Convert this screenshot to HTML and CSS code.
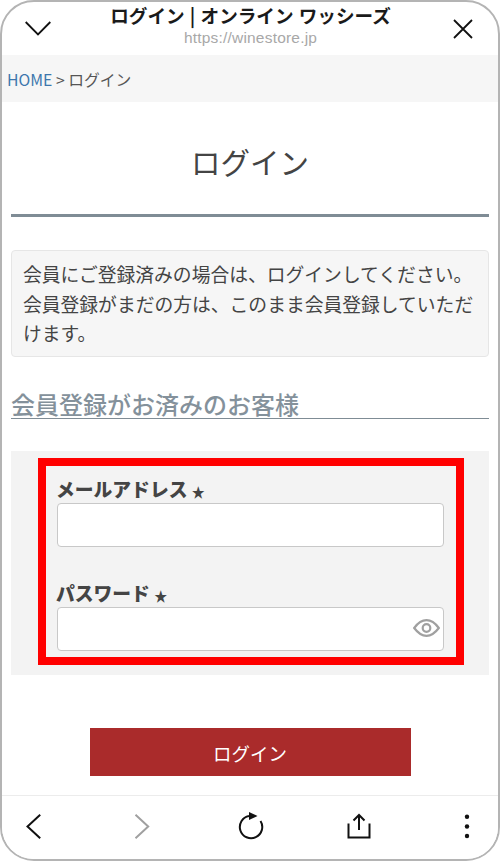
FILE: index.html
```html
<!DOCTYPE html>
<html lang="ja">
<head>
    <meta charset="UTF-8">
    <meta name="viewport" content="width=device-width, initial-scale=1.0">
    <title>ログイン | オンライン ワッシーズ</title>
    <link rel="stylesheet" href="styles.css">
</head>
<body>
    <div class="phone">
        <header class="topbar">
            <svg class="top-icon" width="26" height="15" viewBox="0 0 26 15"><path d="M0.7 1 L13 13.5 L25.3 1" /></svg>
            <div class="top-title">
                <div class="page-name">ログイン | オンライン ワッシーズ</div>
                <div class="page-url">https://winestore.jp</div>
            </div>
            <svg class="top-icon" width="20" height="20" viewBox="0 0 20 20"><path d="M1 1 L19 19 M19 1 L1 19" /></svg>
        </header>
        <nav class="crumbs"><a href="#">HOME</a> &gt; ログイン</nav>
        <main class="content">
            <h1>ログイン</h1>
            <div class="notice">会員にご登録済みの場合は、ログインしてください。<br>会員登録がまだの方は、このまま会員登録していただけます。</div>
            <h2>会員登録がお済みのお客様</h2>
            <div class="form-area">
                <form class="form-box">
                    <label for="email">メールアドレス <span class="star">★</span></label>
                    <input type="text" id="email" class="field">
                    <label for="password" class="second">パスワード <span class="star">★</span></label>
                    <div class="pass-wrap">
                        <input type="password" id="password" class="field">
                        <svg class="eye" width="27" height="18" viewBox="0 0 27 18"><path d="M1.2 9 C5.5 3.2 9.5 1.2 13.5 1.2 C17.5 1.2 21.5 3.2 25.8 9 C21.5 14.8 17.5 16.8 13.5 16.8 C9.5 16.8 5.5 14.8 1.2 9 Z" /><circle cx="13.5" cy="9" r="3.8" /></svg>
                    </div>
                </form>
            </div>
            <button class="login-btn" type="button">ログイン</button>
        </main>
        <footer class="bottombar">
            <svg class="nav-icon" width="40" height="30" viewBox="0 0 40 30"><path d="M26.2 3.8 L13.5 15.5 L26.2 27.2" /></svg>
            <svg class="nav-icon off" width="40" height="30" viewBox="0 0 40 30"><path d="M13.5 3.8 L26.2 15.5 L13.5 27.2" /></svg>
            <svg class="nav-icon" width="40" height="30" viewBox="0 0 40 30"><path d="M18 5 A11.2 11.2 0 1 0 29.5 10" /><path class="solid" d="M18 1 L26.5 5 L18 9 Z" /></svg>
            <svg class="nav-icon" width="40" height="30" viewBox="0 0 40 30"><path d="M20 19 V4 M14.5 9.5 L20 4 L25.5 9.5 M9.5 12.5 V26.5 H30.5 V12.5" /></svg>
            <svg class="nav-icon dots" width="40" height="30" viewBox="0 0 40 30"><circle cx="20" cy="5.7" r="2.2" /><circle cx="20" cy="15.5" r="2.2" /><circle cx="20" cy="25" r="2.2" /></svg>
        </footer>
    </div>
</body>
</html>
```

FILE: styles.css
```css
* {
    box-sizing: border-box;
}
html, body {
    margin: 0;
    height: 100%;
    background-color: #fff;
}
body {
    font-family: "Noto Sans CJK JP", "Noto Sans", sans-serif;
    color: #444;
    overflow: hidden;
}
.phone {
    height: 861px;
    display: flex;
    flex-direction: column;
    background-color: #fff;
    border: 2px solid #b4b4b4;
    border-radius: 34px;
    overflow: hidden;
}
.topbar {
    height: 53px;
    flex: none;
    display: flex;
    align-items: center;
    justify-content: space-between;
    padding: 0 25px 0 23px;
}
.top-icon path {
    fill: none;
    stroke: #111;
    stroke-width: 1.8;
}
.top-title {
    text-align: center;
    margin: -5px 3px 0 0;
}
.page-name {
    font-size: 18.6px;
    line-height: 24px;
    font-weight: 700;
    color: #1a1a1a;
    word-spacing: 1px;
}
.page-url {
    font-family: "Liberation Sans", Arial, sans-serif;
    font-size: 15.5px;
    line-height: 22px;
    letter-spacing: 0.2px;
    color: #a8a8a8;
}
.crumbs {
    height: 47px;
    flex: none;
    padding: 0 5px;
    font-size: 15.8px;
    line-height: 49px;
    background-color: #f6f6f6;
    color: #555;
}
.crumbs a {
    color: #3d76ad;
    text-decoration: none;
}
.content {
    flex: 1;
    min-height: 0;
    padding: 0 9px;
    overflow: hidden;
}
h1 {
    margin: 0;
    height: 115px;
    padding-top: 40px;
    font-size: 29.5px;
    line-height: 38px;
    font-weight: 400;
    text-align: center;
    color: #444;
    border-bottom: 3px solid #7f8c95;
}
.notice {
    margin-top: 33px;
    height: 107px;
    padding: 8px 11px;
    font-size: 18.8px;
    line-height: 29.5px;
    background-color: #f6f6f6;
    border: 1px solid #e6e6e6;
    border-radius: 4px;
}
h2 {
    margin: 31px 0 0;
    height: 31px;
    font-size: 24px;
    line-height: 31px;
    font-weight: 500;
    color: #84919b;
    border-bottom: 1px solid #7f8c95;
    white-space: nowrap;
}
.form-area {
    margin-top: 32px;
    height: 224px;
    padding: 7px 25px 0 27px;
    background-color: #f3f3f3;
}
.form-box {
    height: 207px;
    padding: 11px 12px 0 11px;
    border: 8px solid #ff0000;
}
label {
    display: block;
    height: 24px;
    margin: 0 0 2px -1px;
    font-size: 18.8px;
    line-height: 24px;
    font-weight: 900;
    color: #444;
}
.star {
    font-size: 13px;
    vertical-align: 0;
}
label.second {
    margin-top: 34px;
}
.field {
    display: block;
    width: 100%;
    height: 44px;
    margin: 0;
    background-color: #fff;
    border: 1px solid #c8c8c8;
    border-radius: 4px;
}
.pass-wrap {
    position: relative;
}
.eye {
    position: absolute;
    right: 4px;
    top: 12px;
}
.eye path, .eye circle {
    fill: none;
    stroke: #a0a0a0;
    stroke-width: 2.2;
}
.login-btn {
    display: block;
    width: 321px;
    height: 48px;
    margin: 53px auto 0;
    padding: 2px 0 0;
    font-family: inherit;
    font-size: 18.5px;
    color: #fff;
    background-color: #aa2b2b;
    border: 0;
}
.bottombar {
    height: 64px;
    flex: none;
    display: flex;
    align-items: flex-start;
    justify-content: space-between;
    padding: 15px 11px 0 12px;
    border-top: 1px solid #ececec;
    background-color: #fff;
}
.nav-icon path {
    fill: none;
    stroke: #111;
    stroke-width: 2;
}
.nav-icon path.solid {
    fill: #111;
    stroke: none;
}
.nav-icon.off path {
    stroke: #a0a0a0;
}
.nav-icon.dots circle {
    fill: #111;
}
```
